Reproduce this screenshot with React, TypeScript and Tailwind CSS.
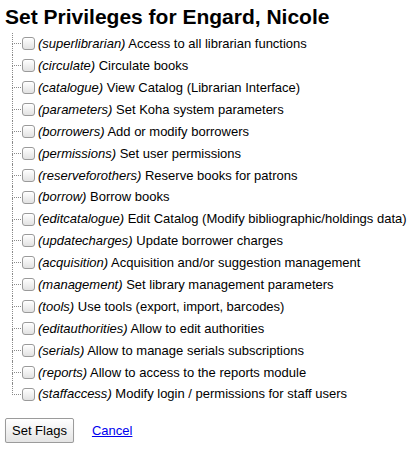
const PERMS: [string, string][] = [
  ["superlibrarian", "Access to all librarian functions"],
  ["circulate", "Circulate books"],
  ["catalogue", "View Catalog (Librarian Interface)"],
  ["parameters", "Set Koha system parameters"],
  ["borrowers", "Add or modify borrowers"],
  ["permissions", "Set user permissions"],
  ["reserveforothers", "Reserve books for patrons"],
  ["borrow", "Borrow books"],
  ["editcatalogue", "Edit Catalog (Modify bibliographic/holdings data)"],
  ["updatecharges", "Update borrower charges"],
  ["acquisition", "Acquisition and/or suggestion management"],
  ["management", "Set library management parameters"],
  ["tools", "Use tools (export, import, barcodes)"],
  ["editauthorities", "Allow to edit authorities"],
  ["serials", "Allow to manage serials subscriptions"],
  ["reports", "Allow to access to the reports module"],
  ["staffaccess", "Modify login / permissions for staff users"],
];

function Box() {
  return (
    <span className="mx-px h-[13px] w-[13px] shrink-0 rounded-[3px] border border-[#9a9a9a] bg-gradient-to-b from-white to-[#e2e2e2] shadow-[inset_0_1px_0_#fff]" />
  );
}

export default function App() {
  return (
    <div className="px-[5px] pt-[3px] font-['Liberation_Sans',Arial,sans-serif] text-black">
      <h1 className="text-[21px] font-bold leading-[28px]">
        Set Privileges for Engard, Nicole
      </h1>
      <ul className="ml-[7px] mt-[2px]">
        {PERMS.map(([code, label], i) => (
          <li key={code} className="flex h-[21.9px] items-center text-[13px]">
            <div className="flex w-[9px] flex-col self-stretch">
              <div className="flex-1 border-b border-l border-dotted border-[#8a8a8a]" />
              <div
                className={`flex-1 ${i < PERMS.length - 1 ? "border-l border-dotted border-[#8a8a8a]" : ""}`}
              />
            </div>
            <Box />
            <span className="ml-[2px] whitespace-nowrap">
              <i>({code})</i> {label}
            </span>
          </li>
        ))}
      </ul>
      <div className="mt-[13px] flex items-center gap-[18px]">
        <button className="h-[25px] rounded-[2px] border border-[#9b9b9b] bg-gradient-to-b from-white to-[#e4e4e4] px-[6px] text-[13px] shadow-[0_1px_1px_rgba(0,0,0,0.15)]">
          Set Flags
        </button>
        <a href="#" className="text-[13px] text-[#0000ee] underline">
          Cancel
        </a>
      </div>
    </div>
  );
}
